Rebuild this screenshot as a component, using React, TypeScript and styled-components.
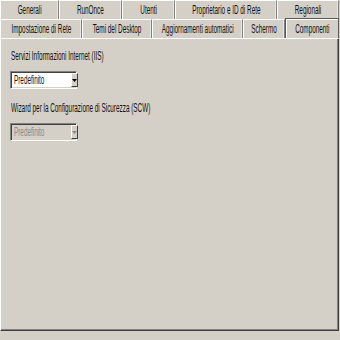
import React from "react";
import styled, { createGlobalStyle } from "styled-components";

const Global = createGlobalStyle`
  html, body { margin: 0; padding: 0; background: #d4d0c8; }
  body { width: 340px; height: 340px; overflow: hidden; font-family: "Liberation Sans", Arial, sans-serif; font-size: 12px; color: #000; }
`;

const Dialog = styled.div`
  width: 340px;
  height: 340px;
  background: #d4d0c8;
  display: flex;
  flex-direction: column;
`;

const TabRow = styled.div`
  display: flex;
  height: 19px;
  width: 339px;
`;

const Tab = styled.div<{ $w: number; $selected?: boolean }>`
  position: relative;
  width: ${(p) => p.$w}px;
  flex: none;
  box-sizing: border-box;
  height: 19px;
  border-top: 1px solid #ffffff;
  border-left: 1px solid #ffffff;
  border-right: 1px solid #808080;
  box-shadow: inset -1px 0 0 #e8e6e0;
  display: flex;
  align-items: center;
  justify-content: center;
  overflow: visible;
  white-space: nowrap;
  ${(p) =>
    p.$selected &&
    `
    height: 20px;
    margin-top: -1px;
    border: 1px solid #5a5a5a;
    border-bottom: none;
    box-shadow: inset 1px 1px 0 #ffffff;
    z-index: 2;
    background: #d4d0c8;
  `}
`;

const Squeeze = styled.span<{ $origin?: string }>`
  display: inline-block;
  transform: scaleX(0.53);
  transform-origin: ${(p) => p.$origin || "center"};
  white-space: nowrap;
  color: #111;
`;

const Panel = styled.div`
  box-sizing: border-box;
  width: 339px;
  height: 293px;
  border-top: 1px solid #ffffff;
  border-left: 1px solid #ffffff;
  border-right: 1px solid #404040;
  border-bottom: 1px solid #404040;
  box-shadow: inset -1px -1px 0 #808080;
  padding: 10px 0 0 9px;
  display: flex;
  flex-direction: column;
`;

const Label = styled.div<{ $top: number }>`
  margin-top: ${(p) => p.$top}px;
  margin-left: 1px;
  height: 14px;
  line-height: 14px;
`;

const Select = styled.div<{ $disabled?: boolean }>`
  margin-top: 8px;
  width: 67px;
  height: 18px;
  box-sizing: border-box;
  border-top: 1px solid #808080;
  border-left: 1px solid #808080;
  border-bottom: 1px solid #ffffff;
  border-right: 1px solid #ffffff;
  box-shadow: inset 1px 1px 0 #404040, inset -1px -1px 0 #d4d0c8;
  background: ${(p) => (p.$disabled ? "#d4d0c8" : "#ffffff")};
  display: flex;
  align-items: center;
  padding: 0 2px 0 3px;
  ${Squeeze} { color: ${(p) => (p.$disabled ? "#8a8a8a" : "#111")}; }
`;

const SelectText = styled.div`
  flex: 1;
  overflow: visible;
  white-space: nowrap;
`;

const Arrow = styled.div<{ $disabled?: boolean }>`
  width: 10px;
  height: 14px;
  box-sizing: border-box;
  background: #d4d0c8;
  border-top: 1px solid #ffffff;
  border-left: 1px solid #ffffff;
  border-right: 1px solid #404040;
  border-bottom: 1px solid #404040;
  display: flex;
  align-items: center;
  justify-content: center;
  svg { display: block; }
  color: ${(p) => (p.$disabled ? "#8a8a8a" : "#000")};
`;

const row1 = [
  { t: "Generali", w: 59 },
  { t: "RunOnce", w: 63 },
  { t: "Utenti", w: 53 },
  { t: "Proprietario e ID di Rete", w: 102 },
  { t: "Regionali", w: 62 },
];

const row2 = [
  { t: "Impostazione di Rete", w: 82 },
  { t: "Temi del Desktop", w: 70 },
  { t: "Aggiornamenti automatici", w: 91 },
  { t: "Schermo", w: 42 },
  { t: "Componenti", w: 54, sel: true },
];

const Drop = ({ disabled }: { disabled?: boolean }) => (
  <Select $disabled={disabled}>
    <SelectText>
      <Squeeze $origin="left">Predefinito</Squeeze>
    </SelectText>
    <Arrow $disabled={disabled}>
      <svg width="5" height="3" viewBox="0 0 5 3">
        <path d="M0 0h5L2.5 3z" fill="currentColor" />
      </svg>
    </Arrow>
  </Select>
);

export default function App() {
  return (
    <>
      <Global />
      <Dialog>
        <TabRow>
          {row1.map((r) => (
            <Tab key={r.t} $w={r.w}>
              <Squeeze>{r.t}</Squeeze>
            </Tab>
          ))}
        </TabRow>
        <TabRow>
          {row2.map((r) => (
            <Tab key={r.t} $w={r.w} $selected={r.sel}>
              <Squeeze>{r.t}</Squeeze>
            </Tab>
          ))}
        </TabRow>
        <Panel>
          <Label $top={0}>
            <Squeeze $origin="left">Servizi Informazioni Internet (IIS)</Squeeze>
          </Label>
          <Drop />
          <Label $top={12}>
            <Squeeze $origin="left">Wizard per la Configurazione di Sicurezza (SCW)</Squeeze>
          </Label>
          <Drop disabled />
        </Panel>
      </Dialog>
    </>
  );
}
